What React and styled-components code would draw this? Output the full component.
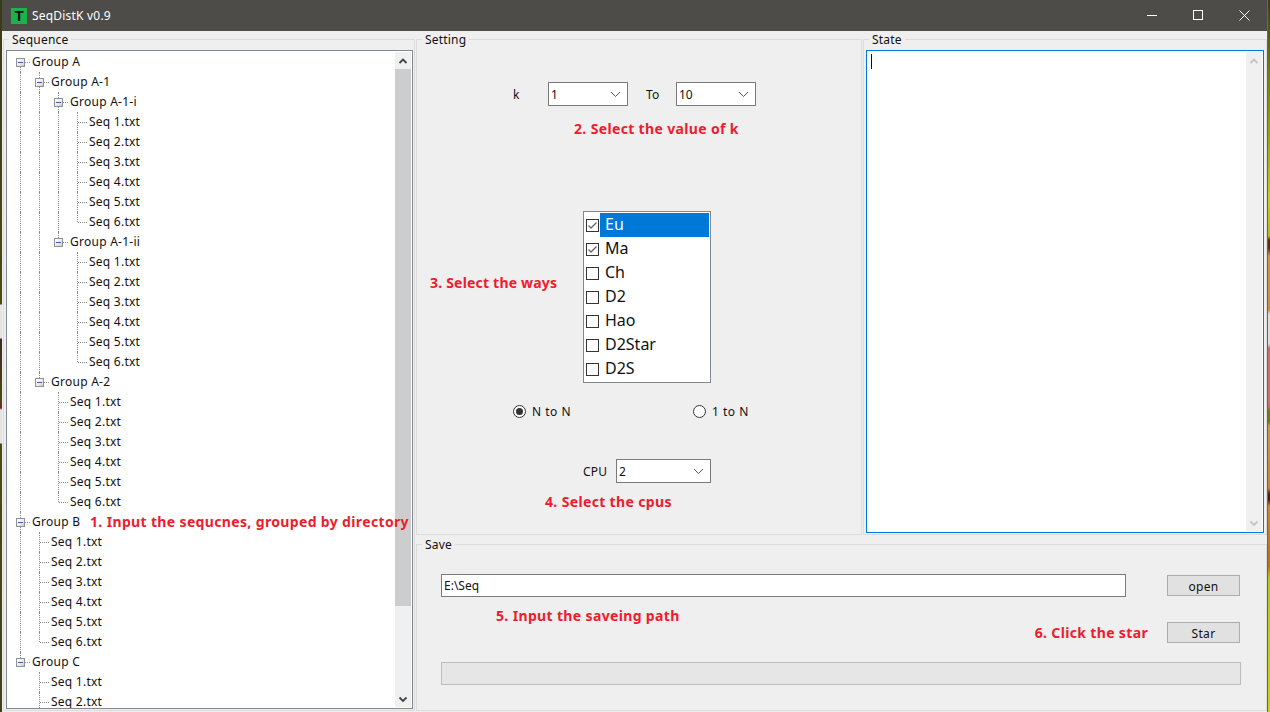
import React from "react";
import styled, { createGlobalStyle } from "styled-components";

const GlobalStyle = createGlobalStyle`
  html, body {
    margin: 0;
    padding: 0;
    overflow: hidden;
  }
  body {
    font-family: "Noto Sans", "Open Sans", sans-serif;
    font-size: 12px;
    color: #111;
  }
`;

const seqFiles = ["Seq 1.txt", "Seq 2.txt", "Seq 3.txt", "Seq 4.txt", "Seq 5.txt", "Seq 6.txt"];
const leaves = () => seqFiles.map((name) => ({ name }));

const tree = [
  {
    name: "Group A",
    children: [
      {
        name: "Group A-1",
        children: [
          { name: "Group A-1-i", children: leaves() },
          { name: "Group A-1-ii", children: leaves() },
        ],
      },
      { name: "Group A-2", children: leaves() },
    ],
  },
  { name: "Group B", children: leaves() },
  { name: "Group C", children: leaves() },
];

// rows that fit in the list box before it clips
const VISIBLE_ROWS = 33;

const flatten = (nodes, guides = []) =>
  nodes.flatMap((node, i) => {
    const last = i === nodes.length - 1;
    const first = i === 0 && guides.length === 0;
    const row = { name: node.name, guides, last, first, folder: !!node.children };
    const kids = node.children ? flatten(node.children, [...guides, !last]) : [];
    return [row, ...kids];
  });

const ways = [
  { name: "Eu", checked: true, active: true },
  { name: "Ma", checked: true },
  { name: "Ch" },
  { name: "D2" },
  { name: "Hao" },
  { name: "D2Star" },
  { name: "D2S" },
];

const Desktop = styled.div`
  width: 1270px;
  height: 712px;
  padding: 0 2px 0 2px;
  box-sizing: border-box;
  background:
    linear-gradient(
        180deg,
        #3a3a1c 0,
        #4a4a12 304px,
        #e4e4e4 305px,
        #e4e4e4 338px,
        #3a2a20 339px,
        #4a4a12 400px,
        #7a2030 408px,
        #e4e4e4 410px,
        #e4e4e4 443px,
        #4a4a12 444px,
        #40401c 100%
      )
      left / 2px 100% no-repeat,
    linear-gradient(
        180deg,
        #3d3d1a 0,
        #6f7a14 70px,
        #c3cf12 200px,
        #b7b820 236px,
        #5a2a12 240px,
        #5a2a12 248px,
        #c79a4a 256px,
        #c89048 310px,
        #dcdcdc 314px,
        #dcdcdc 344px,
        #c9706c 348px,
        #c9706c 405px,
        #6d7a20 412px,
        #6d7a20 422px,
        #c89a4c 426px,
        #c08a3a 488px,
        #4a2010 494px,
        #4a2010 500px,
        #c98a34 506px,
        #b8701e 566px,
        #b9c814 578px,
        #c4d410 100%
      )
      right / 2px 100% no-repeat;
`;

const Window = styled.div`
  height: 100%;
  display: flex;
  flex-direction: column;
  background: #efefef;
  border-right: 1px solid #666;
`;

const TitleBar = styled.div`
  height: 31px;
  flex: none;
  display: flex;
  align-items: center;
  background: #4d4c49;
  color: #fff;
  padding-left: 9px;
`;

const AppIcon = styled.div`
  width: 16px;
  height: 16px;
  background: #19b24b;
  color: #111;
  font: bold 15px/16px "Liberation Sans", sans-serif;
  text-align: center;
`;

const Title = styled.div`
  margin-left: 5px;
  font-size: 12px;
  letter-spacing: 0.2px;
  flex: 1;
`;

const WinButton = styled.div`
  width: 46px;
  height: 31px;
  display: flex;
  align-items: center;
  justify-content: center;
`;

const Content = styled.div`
  flex: 1;
  min-height: 0;
  display: grid;
  grid-template-columns: 412px 446px 1fr;
  grid-template-rows: 1fr 177px;
  column-gap: 1px;
  padding-left: 1px;
`;

const Frame = styled.div`
  position: relative;
  border: 1px solid #dcdcdc;
  ${(p) => p.$tall && "grid-row: 1 / span 2;"}
  ${(p) => p.$wide && "grid-column: 2 / span 2;"}
  margin-top: ${(p) => p.$top || 8}px;
  margin-bottom: ${(p) => p.$bottom || 0}px;
  display: flex;
  flex-direction: column;
  min-height: 0;
  box-sizing: border-box;
`;

const Legend = styled.span`
  position: absolute;
  left: 5px;
  top: -8px;
  padding: 0 3px;
  background: #efefef;
  font-size: 12px;
  line-height: 15px;
  letter-spacing: 0.2px;
`;

const TreeBox = styled.div`
  position: relative;
  margin: 10px 1px 1px 2px;
  flex: 1;
  min-height: 0;
  border: 1px solid #828790;
  background: #fff;
  display: flex;
  overflow: hidden;
`;

const TreeList = styled.div`
  flex: 1;
  min-width: 0;
  padding: 1px 0 0 4px;
  overflow: hidden;
`;

const TreeRow = styled.div`
  height: 20px;
  display: flex;
  align-items: stretch;
`;

const Guide = styled.div`
  position: relative;
  width: 19px;
  flex: none;
  &::before {
    content: "";
    position: absolute;
    left: 9px;
    top: ${(p) => (p.$first ? "10px" : "0")};
    bottom: ${(p) => (p.$last ? "10px" : "0")};
    border-left: ${(p) => (p.$line ? "1px dotted #8a8a8a" : "0")};
  }
  &::after {
    content: "";
    position: absolute;
    left: 10px;
    top: 10px;
    width: 9px;
    border-top: ${(p) => (p.$branch ? "1px dotted #8a8a8a" : "0")};
  }
`;

const Expander = styled.span`
  position: absolute;
  z-index: 1;
  left: 5px;
  top: 6px;
  width: 9px;
  height: 9px;
  box-sizing: border-box;
  border: 1px solid #8f9398;
  background: linear-gradient(135deg, #fff 0%, #e8e8e8 60%, #c9c9c9 100%);
  &::after {
    content: "";
    position: absolute;
    left: 1px;
    top: 3px;
    width: 5px;
    height: 1px;
    background: #3a5ea8;
  }
`;

const RowText = styled.span`
  margin-left: 2px;
  line-height: 20px;
  font-size: 12px;
  letter-spacing: 0.25px;
  white-space: nowrap;
`;

const Scrollbar = styled.div`
  width: 16px;
  flex: none;
  margin: 1px;
  background: #f0f0f0;
  display: flex;
  flex-direction: column;
  align-items: center;
  color: ${(p) => p.$arrow};
`;

const ArrowCap = styled.div`
  height: 17px;
  flex: none;
  display: flex;
  align-items: center;
  justify-content: center;
`;

const Track = styled.div`
  flex: 1;
  min-height: 0;
  width: 100%;
`;

const Thumb = styled.div`
  width: 100%;
  height: 537px;
  background: #cdcdcd;
`;

const Hint = styled.div`
  color: #ed1c2e;
  font-size: 14px;
  font-weight: 700;
  line-height: 20px;
  letter-spacing: 0.35px;
  white-space: nowrap;
`;

const TreeHint = styled(Hint)`
  position: absolute;
  left: 83px;
  top: 461px;
`;

const Settings = styled.div`
  flex: 1;
  display: flex;
  flex-direction: column;
`;

const KRow = styled.div`
  margin-top: 42px;
  padding-left: 96px;
  height: 24px;
  display: flex;
  align-items: center;
`;

const FieldLabel = styled.span`
  width: ${(p) => p.$width}px;
  padding-left: ${(p) => p.$pad || 0}px;
  box-sizing: border-box;
  flex: none;
  letter-spacing: 0.2px;
`;

const Select = styled.div`
  width: ${(p) => p.$width || 80}px;
  height: 24px;
  box-sizing: border-box;
  flex: none;
  border: 1px solid #7a7a7a;
  background: #fff;
  padding: 0 6px 0 2px;
  display: flex;
  align-items: center;
  justify-content: space-between;
  color: #111;
`;

const IndentedHint = styled(Hint)`
  margin-top: ${(p) => p.$top}px;
  padding-left: ${(p) => p.$left}px;
`;

const WaysRow = styled.div`
  margin-top: 72px;
  display: flex;
  align-items: flex-start;
`;

const WaysLabel = styled(Hint)`
  width: 166px;
  margin-top: 62px;
  padding-left: 13px;
  box-sizing: border-box;
  flex: none;
  letter-spacing: 0.2px;
`;

const ListBox = styled.div`
  width: 128px;
  height: 172px;
  box-sizing: border-box;
  border: 1px solid #828790;
  background: #fff;
  padding: 1px 1px 1px 2px;
`;

const ListItem = styled.div`
  height: 24px;
  display: flex;
  align-items: center;
  font-size: 16px;
`;

const CheckBox = styled.span`
  width: 13px;
  height: 13px;
  box-sizing: border-box;
  flex: none;
  margin-right: 1px;
  border: 1px solid #333;
  background: #fff;
  display: flex;
  align-items: center;
  justify-content: center;
`;

const ItemName = styled.span`
  flex: 1;
  height: 24px;
  line-height: 22px;
  padding-left: 5px;
  background: ${(p) => (p.$active ? "#0078d7" : "transparent")};
  color: ${(p) => (p.$active ? "#fff" : "#111")};
`;

const RadioRow = styled.div`
  margin-top: 18px;
  padding-left: 96px;
  height: 20px;
  display: flex;
  align-items: center;
`;

const Radio = styled.label`
  width: 180px;
  flex: none;
  display: flex;
  align-items: center;
  gap: 6px;
  letter-spacing: 0.5px;
`;

const RadioDot = styled.span`
  width: 13px;
  height: 13px;
  border-radius: 50%;
  box-sizing: border-box;
  border: 1px solid #333;
  background: #fff;
  display: flex;
  align-items: center;
  justify-content: center;
  &::after {
    content: "";
    width: 7px;
    height: 7px;
    border-radius: 50%;
    background: ${(p) => (p.$on ? "#333" : "transparent")};
  }
`;

const CpuRow = styled.div`
  margin-top: 38px;
  padding-left: 166px;
  height: 24px;
  display: flex;
  align-items: center;
`;

const StateBox = styled.div`
  margin: 10px 2px 0 2px;
  height: 483px;
  box-sizing: border-box;
  border: 1px solid #0078d7;
  background: #fff;
  display: flex;
  justify-content: space-between;
`;

const Caret = styled.div`
  width: 1px;
  height: 15px;
  margin: 3px 0 0 4px;
  background: #111;
`;

const SaveBody = styled.div`
  flex: 1;
  padding: 29px 26px 0 24px;
  display: flex;
  flex-direction: column;
`;

const SaveRow = styled.div`
  display: flex;
  align-items: center;
  justify-content: ${(p) => (p.$end ? "flex-end" : "flex-start")};
  margin-top: ${(p) => p.$top || 0}px;
`;

const PathInput = styled.div`
  width: 685px;
  height: 23px;
  box-sizing: border-box;
  border: 1px solid #7a7a7a;
  background: #fff;
  padding-left: 2px;
  line-height: 21px;
  flex: none;
`;

const Button = styled.div`
  width: 73px;
  height: 21px;
  box-sizing: border-box;
  flex: none;
  border: 1px solid #adadad;
  background: #e1e1e1;
  text-align: center;
  line-height: 21px;
  letter-spacing: 0.3px;
  margin-left: ${(p) => p.$left || 0}px;
`;

const ProgressBar = styled.div`
  width: 800px;
  height: 23px;
  box-sizing: border-box;
  margin-top: 19px;
  border: 1px solid #bcbcbc;
  background: #e6e6e6;
`;

const Chevron = ({ up, size = 10 }) => (
  <svg width={size} height={size} viewBox="0 0 10 10" fill="none" stroke="currentColor" strokeWidth="1.8">
    <path d={up ? "M1.5 7 5 3.5 8.5 7" : "M1.5 3.5 5 7 8.5 3.5"} />
  </svg>
);

const SelectArrow = () => (
  <svg width="11" height="7" viewBox="0 0 11 7" fill="none" stroke="#555" strokeWidth="1">
    <path d="M1 1l4.5 4.5L10 1" />
  </svg>
);

const Tick = () => (
  <svg width="11" height="11" viewBox="0 0 11 11" fill="none" stroke="#666" strokeWidth="1.3">
    <path d="M1.5 5.5 4 8l5.5-5.5" />
  </svg>
);

const App = () => {
  const rows = flatten(tree).slice(0, VISIBLE_ROWS);
  return (
    <Desktop>
      <GlobalStyle />
      <Window>
        <TitleBar>
          <AppIcon>T</AppIcon>
          <Title>SeqDistK v0.9</Title>
          <WinButton>
            <svg width="11" height="11" viewBox="0 0 11 11" stroke="#fff" fill="none">
              <path d="M0 5.5h10" />
            </svg>
          </WinButton>
          <WinButton>
            <svg width="11" height="11" viewBox="0 0 11 11" stroke="#fff" fill="none">
              <rect x="0.5" y="0.5" width="9" height="9" />
            </svg>
          </WinButton>
          <WinButton>
            <svg width="11" height="11" viewBox="0 0 11 11" stroke="#fff" fill="none">
              <path d="M0.5 0.5l10 10M10.5 0.5l-10 10" />
            </svg>
          </WinButton>
        </TitleBar>
        <Content>
          <Frame $tall $bottom={1}>
            <Legend>Sequence</Legend>
            <TreeBox>
              <TreeList>
                {rows.map((row, i) => (
                  <TreeRow key={i}>
                    {row.guides.map((on, g) => (
                      <Guide key={g} $line={on} />
                    ))}
                    <Guide $line $first={row.first} $last={row.last} $branch>
                      {row.folder && <Expander />}
                    </Guide>
                    <RowText>{row.name}</RowText>
                  </TreeRow>
                ))}
              </TreeList>
              <Scrollbar $arrow="#444">
                <ArrowCap>
                  <Chevron up />
                </ArrowCap>
                <Track>
                  <Thumb />
                </Track>
                <ArrowCap>
                  <Chevron />
                </ArrowCap>
              </Scrollbar>
              <TreeHint>1. Input the sequcnes, grouped by directory</TreeHint>
            </TreeBox>
          </Frame>

          <Frame>
            <Legend>Setting</Legend>
            <Settings>
              <KRow>
                <FieldLabel $width={35}>k</FieldLabel>
                <Select>
                  1
                  <SelectArrow />
                </Select>
                <FieldLabel $width={48} $pad={18}>
                  To
                </FieldLabel>
                <Select>
                  10
                  <SelectArrow />
                </Select>
              </KRow>
              <IndentedHint $top={13} $left={157}>
                2. Select the value of k
              </IndentedHint>
              <WaysRow>
                <WaysLabel>3. Select the ways</WaysLabel>
                <ListBox>
                  {ways.map((way) => (
                    <ListItem key={way.name}>
                      <CheckBox>{way.checked && <Tick />}</CheckBox>
                      <ItemName $active={way.active}>{way.name}</ItemName>
                    </ListItem>
                  ))}
                </ListBox>
              </WaysRow>
              <RadioRow>
                <Radio>
                  <RadioDot $on />N to N
                </Radio>
                <Radio>
                  <RadioDot />1 to N
                </Radio>
              </RadioRow>
              <CpuRow>
                <FieldLabel $width={33}>CPU</FieldLabel>
                <Select $width={95}>
                  2
                  <SelectArrow />
                </Select>
              </CpuRow>
              <IndentedHint $top={9} $left={128}>
                4. Select the cpus
              </IndentedHint>
            </Settings>
          </Frame>

          <Frame>
            <Legend>State</Legend>
            <StateBox>
              <Caret />
              <Scrollbar $arrow="#c4c4c4">
                <ArrowCap>
                  <Chevron up />
                </ArrowCap>
                <Track />
                <ArrowCap>
                  <Chevron />
                </ArrowCap>
              </Scrollbar>
            </StateBox>
          </Frame>

          <Frame $wide $top={9} $bottom={1}>
            <Legend>Save</Legend>
            <SaveBody>
              <SaveRow>
                <PathInput>E:\Seq</PathInput>
                <Button $left={41}>open</Button>
              </SaveRow>
              <IndentedHint $top={9} $left={55}>
                5. Input the saveing path
              </IndentedHint>
              <SaveRow $end $top={-4}>
                <Hint>6. Click the star</Hint>
                <Button $left={19}>Star</Button>
              </SaveRow>
              <ProgressBar />
            </SaveBody>
          </Frame>
        </Content>
      </Window>
    </Desktop>
  );
};

export default App;
